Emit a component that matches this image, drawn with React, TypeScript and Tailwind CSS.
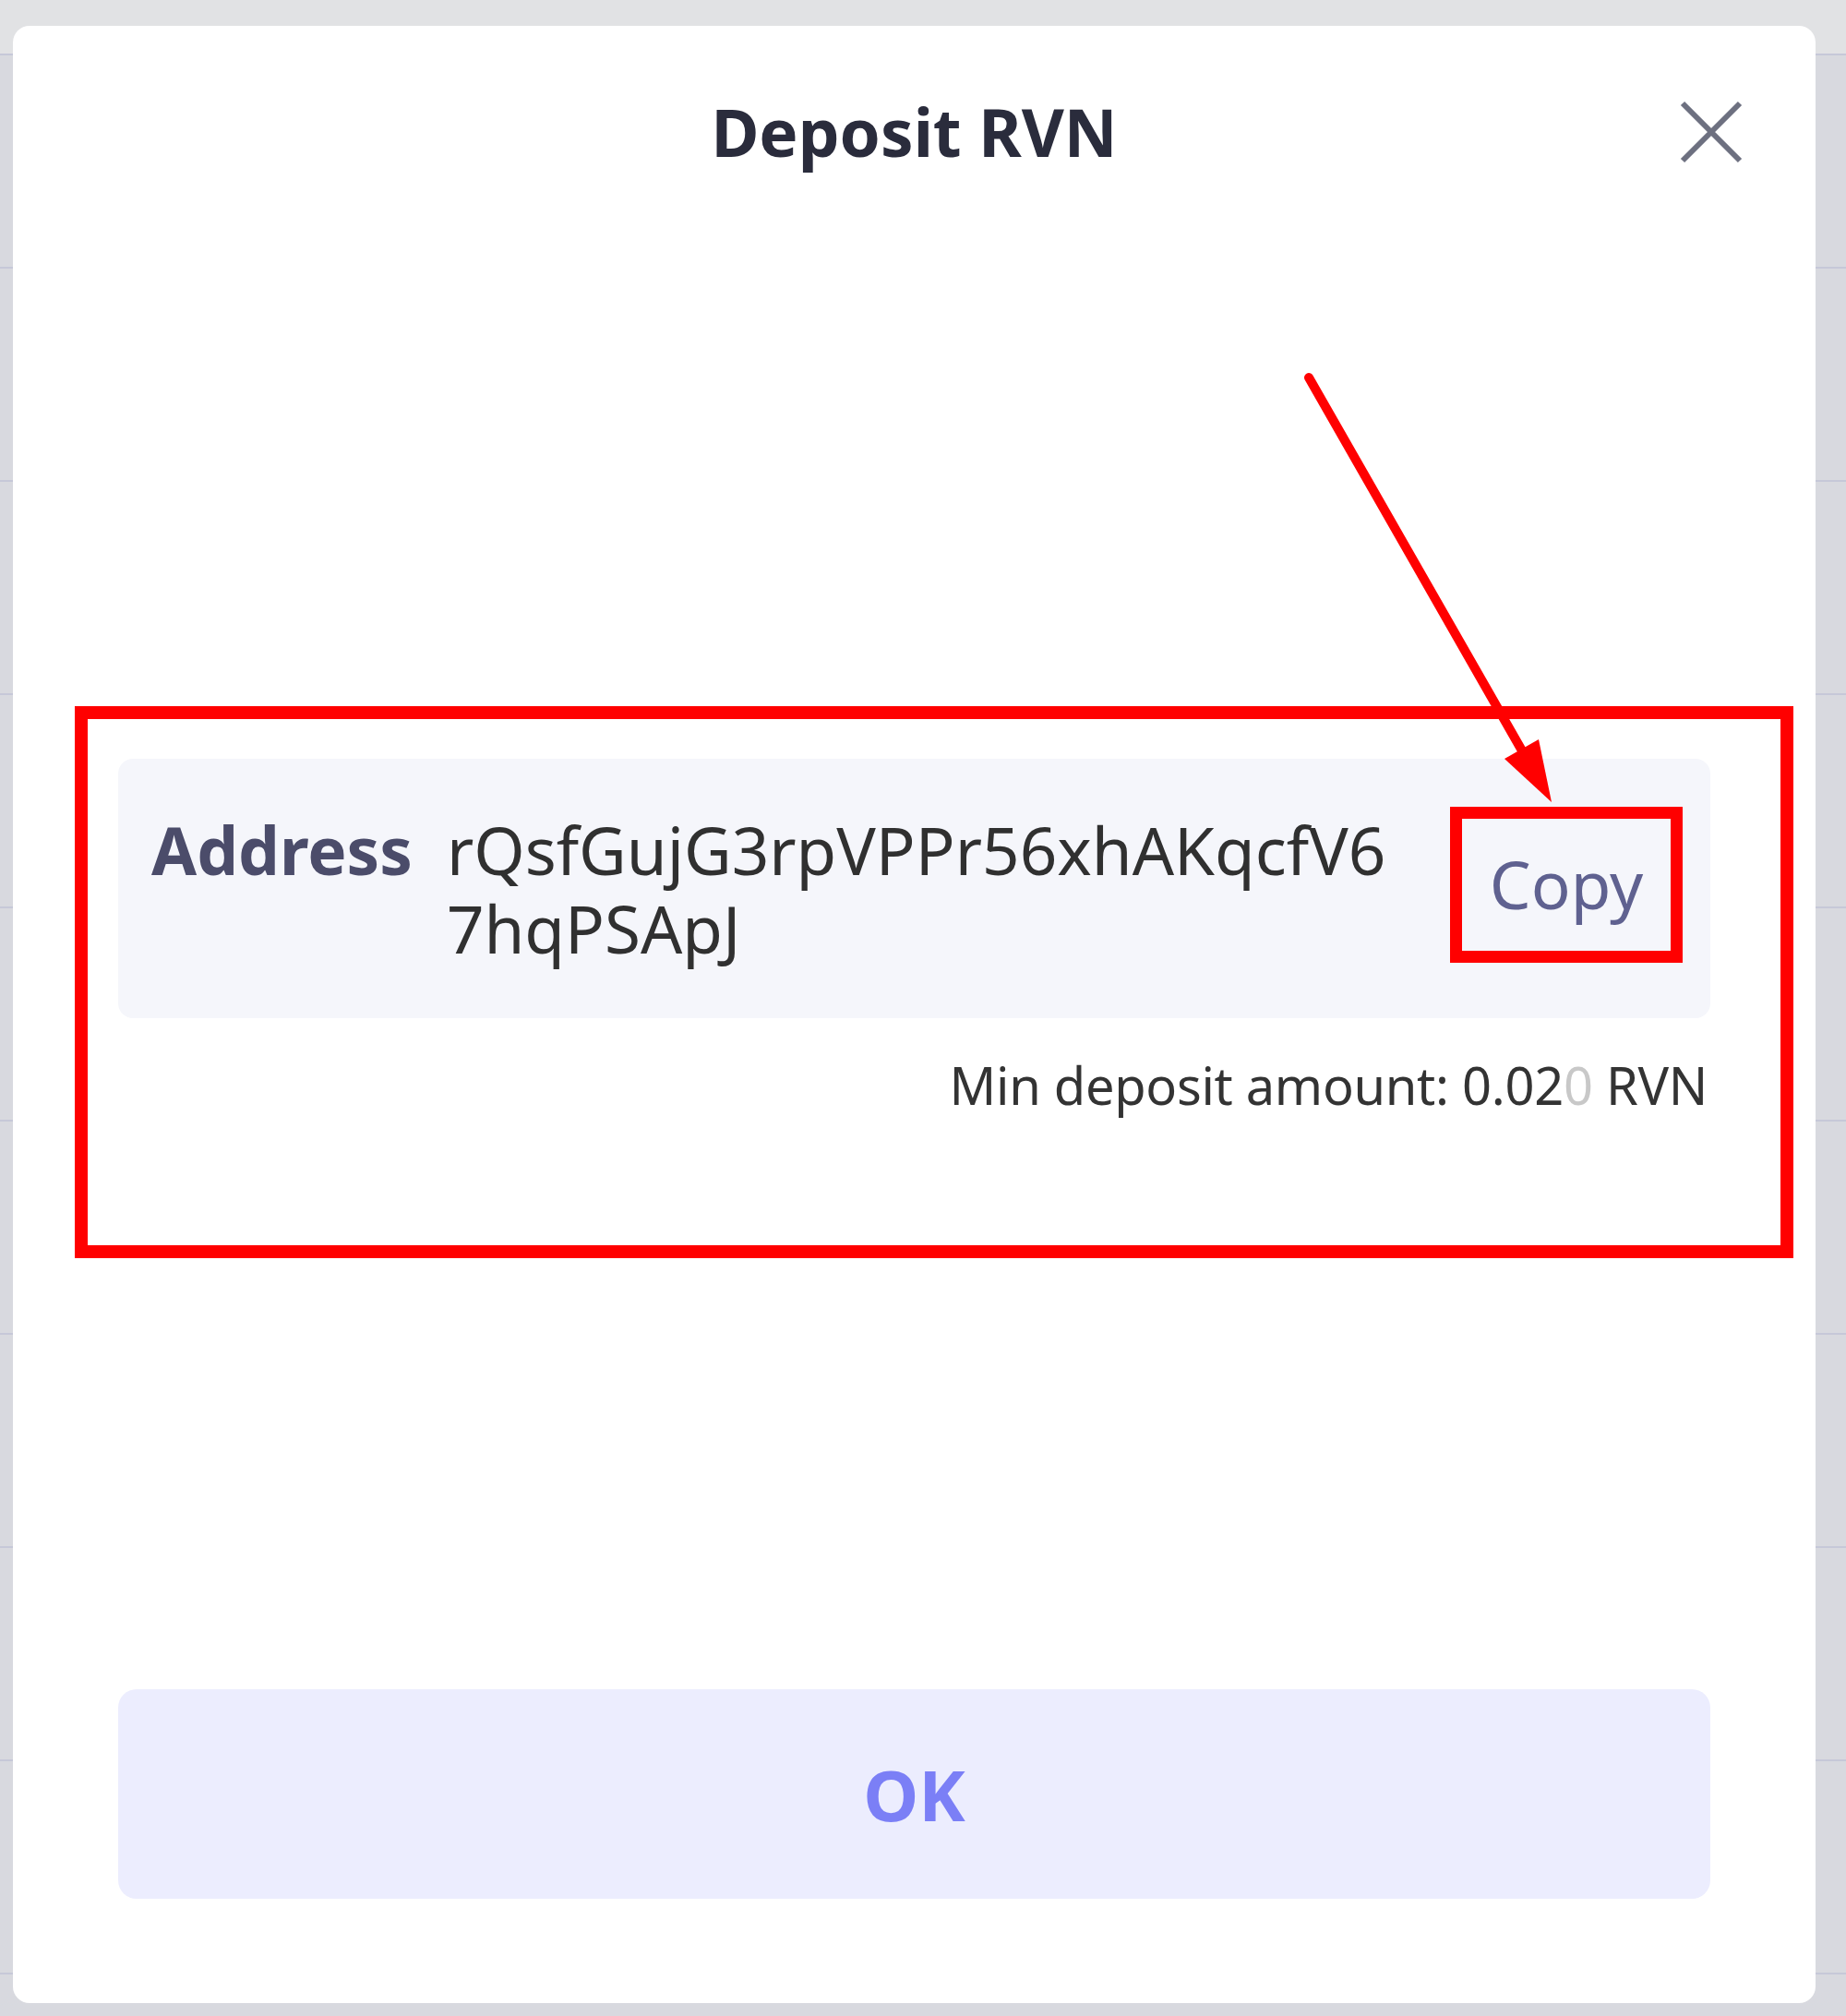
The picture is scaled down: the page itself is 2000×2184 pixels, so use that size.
import React from "react"

const rows = [0, 1, 2, 3, 4, 5, 6, 7, 8]

function CloseIcon() {
  return (
    <svg width="72" height="72" viewBox="0 0 72 72" fill="none">
      <path d="M5 5 L67 67 M67 5 L5 67" stroke="#6d7080" strokeWidth="6" strokeLinecap="butt" />
    </svg>
  )
}

export default function App() {
  return (
    <div
      className="relative w-[2000px] h-[2184px] overflow-hidden bg-[#d8d9df]"
      style={{ fontFamily: '"Noto Sans", "Open Sans", sans-serif' }}
    >
      {/* page behind the dimmed overlay */}
      <div className="flex flex-col">
        <div className="h-[60px] bg-[#e1e2e4] border-b-2 border-[#c6c8d8]"></div>
        {rows.map((r) => (
          <div key={r} className="h-[231px] border-b-2 border-[#c6c8d8]"></div>
        ))}
      </div>

      {/* modal */}
      <div className="absolute left-[14px] top-[28px] w-[1953px] h-[2142px] bg-white rounded-[18px] flex flex-col px-[114px] pb-[113px]">
        <div className="grid grid-cols-[1fr_auto_1fr] items-center pt-[65px] -mx-[114px]">
          <div></div>
          <h1 className="text-[71px] leading-[100px] font-bold text-[#2a2c3c]">Deposit RVN</h1>
          <div className="flex justify-end pr-[77px]">
            <button className="flex items-center justify-center">
              <CloseIcon />
            </button>
          </div>
        </div>

        <div className="mt-[629px] flex items-center bg-[#f5f6fb] rounded-[16px] pl-[36px] pr-[30px] pt-[56px] pb-[55px]">
          <div className="flex flex-1 min-w-0 self-start">
            <span className="text-[71px] leading-[85px] font-bold text-[#4b4c6a] whitespace-nowrap">Address</span>
            <span className="ml-[37px] flex-1 min-w-0 break-all text-[71px] leading-[85px] text-[#303030]">
              rQsfGujG3rpVPPr56xhAKqcfV67hqPSApJ
            </span>
          </div>
          <button className="ml-[40px] -mt-[10px] w-[252px] h-[169px] border-[13px] border-[#ff0000] flex items-center justify-center text-[71px] text-[#5f6190]">
            Copy
          </button>
        </div>

        <p className="mt-[34px] text-right pr-[3px] text-[56px] leading-[76px] text-[#333] tracking-[-0.3px]">
          Min deposit amount: 0.02<span className="text-[#c8c8c8]">0</span> RVN
        </p>

        <button className="mt-auto h-[227px] rounded-[20px] bg-[#ecedfe] text-[76px] font-bold text-[#7b7ff6]">
          OK
        </button>

        {/* annotation: red outline */}
        <div className="absolute left-[67px] top-[737px] w-[1862px] h-[598px] border-[14px] border-[#ff0000] pointer-events-none"></div>

        {/* annotation: arrow to Copy */}
        <svg className="absolute left-[1380px] top-[360px] pointer-events-none" width="320" height="500" viewBox="0 0 320 500" fill="none">
          <line x1="24" y1="21" x2="256" y2="427" stroke="#ff0000" strokeWidth="10" strokeLinecap="round" />
          <polygon points="287,481 273,413 236,434" fill="#ff0000" />
        </svg>
      </div>
    </div>
  )
}
